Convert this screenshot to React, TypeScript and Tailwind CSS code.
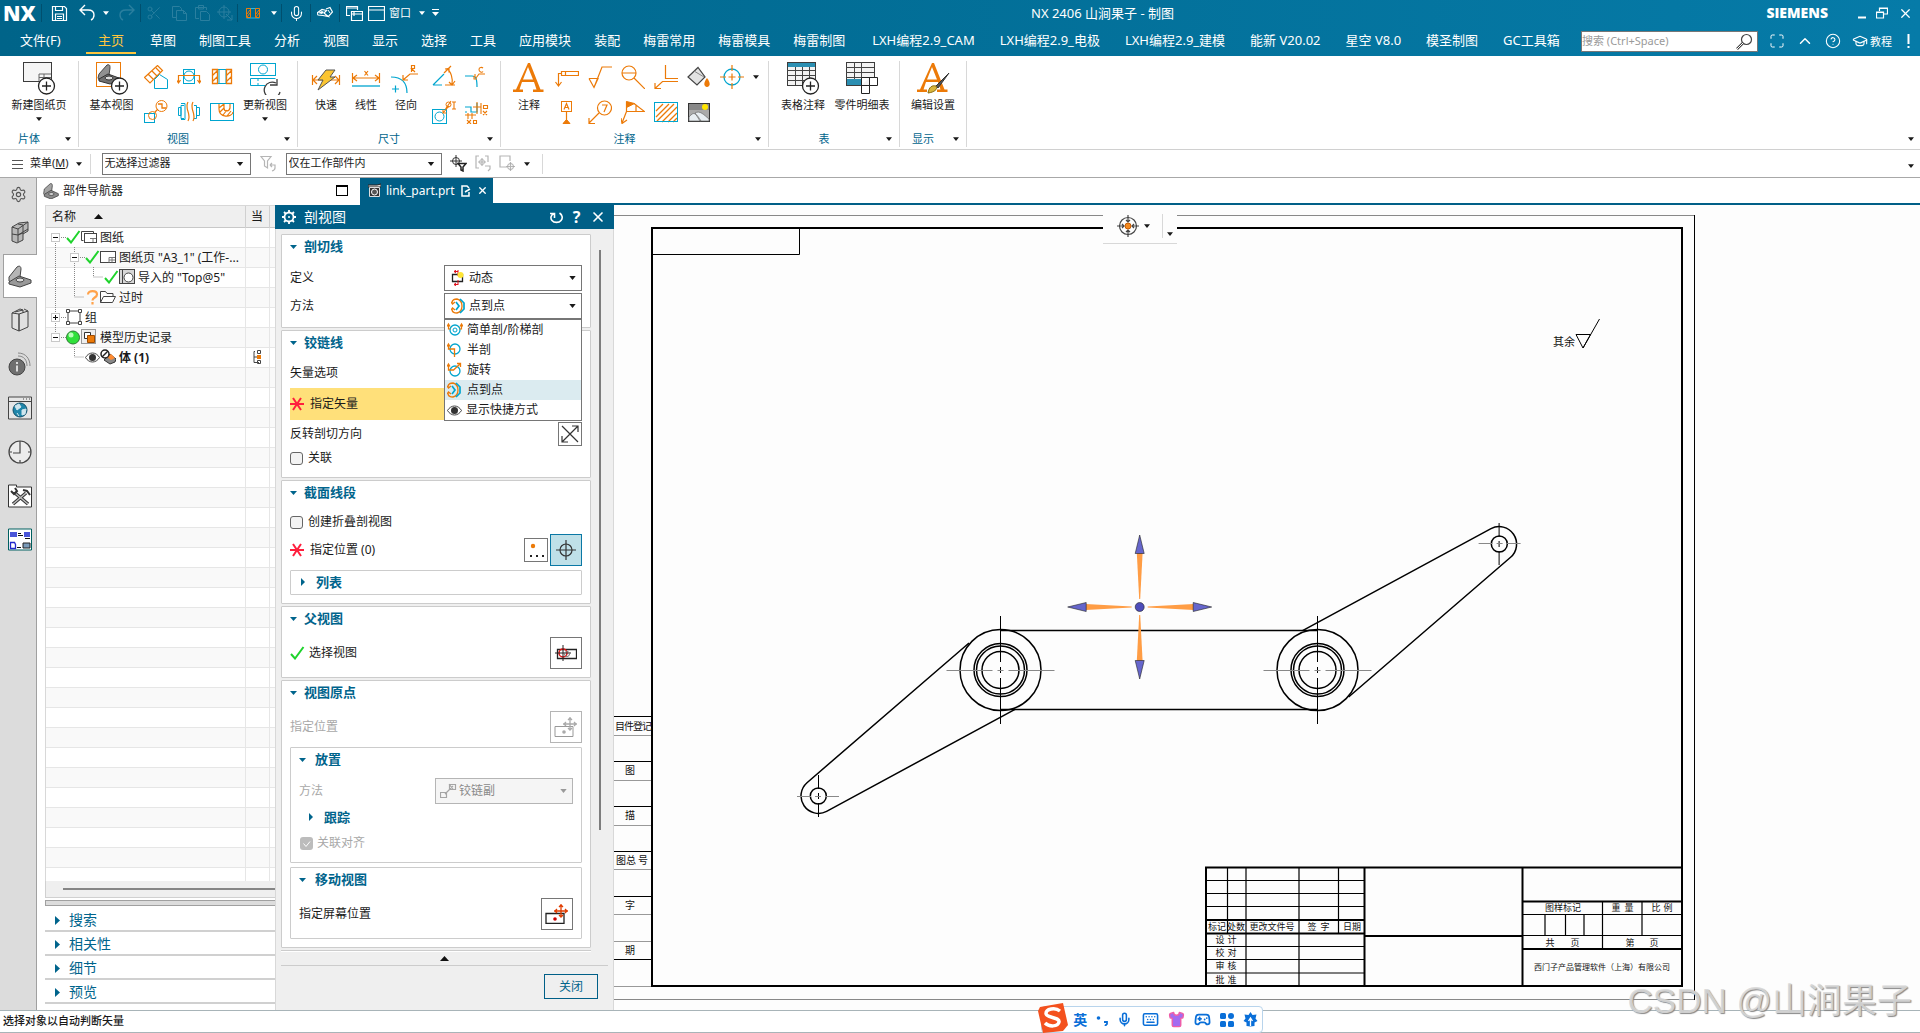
import type { ReactNode } from "react";
import { Settings, Maximize, ChevronUp, CircleHelp, GraduationCap, Mic, Scissors, X, Keyboard, Shirt, Gamepad2 } from "lucide-react";

const O = "#ec7a08";
const C = "#00a5cf";
const K = "#3c3c3c";

function Svg({ w = 24, h = w, box, children }: { w?: number; h?: number; box?: string; children: ReactNode }) {
  return (
    <svg width={w} height={h} viewBox={box ?? `0 0 ${w} ${h}`} fill="none" className="block shrink-0" aria-hidden="true">
      {children}
    </svg>
  );
}

function Caret({ color = "#1a1a1a", w = 6 }: { color?: string; w?: number }) {
  return (
    <Svg w={w} h={4} box="0 0 8 5">
      <path d="M0 0h8L4 5z" fill={color} />
    </Svg>
  );
}

/* ---------- ribbon icons ---------- */

const Plus = ({ x, y }: { x: number; y: number }) => (
  <g>
    <circle cx={x} cy={y} r="8" fill="#fff" stroke="#222" strokeWidth="1.3" />
    <path d={`M${x - 4.5} ${y}h9M${x} ${y - 4.5}v9`} stroke="#222" strokeWidth="1.3" />
  </g>
);

const NewSheet = () => (
  <Svg w={34}>
    <rect x="1.5" y="1.5" width="28" height="19" fill="#f5f5f5" stroke={K} />
    <path d="M17 13h12M17 16.5h12M17 13v7M22 13v7" stroke="#666" />
    <Plus x={24.5} y={25} />
  </Svg>
);

const Bracket = ({ s = 16 }: { s?: number }) => (
  <Svg w={s} box="0 0 24 24">
    <path d="M2 9L11 1c2-1 3 1 3 3l-1 8-10 7-2-3z" fill="#a5a5a5" stroke="#444" strokeWidth="1.2" />
    <path d="M2 17l10-6 11 5v3l-11 5L2 20z" fill="#8b8b8b" stroke="#444" strokeWidth="1.2" />
    <ellipse cx="12.5" cy="16.5" rx="4" ry="2.2" fill="#d5d5d5" stroke="#333" />
  </Svg>
);

const BaseView = () => (
  <Svg w={34}>
    <rect x="1.5" y="1.5" width="24" height="24" fill="#fff" stroke={O} />
    <path d="M4 13L12 4c3-1 3 1 3 3l-1 7-9 6-2-3z" fill="#909090" stroke="#444" />
    <path d="M4 18l9-5 11 4v3l-9 3-11-3z" fill="#707070" stroke="#333" />
    <ellipse cx="14" cy="17" rx="4" ry="2" fill="#ddd" stroke="#333" />
    <Plus x={24.5} y={25} />
  </Svg>
);

const UpdateView = () => (
  <Svg w={34}>
    <rect x="2.5" y="2.5" width="25" height="12" stroke={C} />
    <circle cx="15" cy="8.5" r="4.5" stroke={C} />
    <path d="M17 24.5H2.5v-7h25M10 18v2M10 22v2" stroke={C} />
    <path d="M29 18v6h-7M28 22a8 8 0 1 0 4 9" stroke={K} strokeWidth="1.3" />
  </Svg>
);

const viewIcons = [
  <g key="a">
    <path d="M.5 12.5L13.5.5l5 5L6 18zM4 9l5 5M8 6l5 5M12 3l4 4" stroke={O} strokeWidth="1.2" />
    <path d="M10.5 23.5v-9l5-5 8 5v9z" fill="#fff" stroke={C} />
  </g>,
  <g key="b">
    <rect x="6.5" y="4.5" width="11" height="14" stroke={C} />
    <circle cx="12" cy="11" r="5" stroke={C} />
    <path d="M1.5 17v-6.500h21V17M-.5 15l2 3 2-3M20.5 15l2 3 2-3" stroke={O} strokeWidth="1.2" />
  </g>,
  <g key="c">
    <path d="M2.5 4.5h19M2.5 18.5h19M9 4v15M16 4v15" stroke={C} />
    <path d="M2.5 4.5h5v14h-5zM16.5 4.5h5v14h-5zM2 11l6-6M2 17l6-6M16 11l6-6M16 17l6-6" stroke={O} strokeWidth="1.3" />
  </g>,
  <g key="d">
    <rect x=".5" y="13.5" width="10" height="9" stroke={C} />
    <circle cx="8.5" cy="15.5" r="4" stroke={O} />
    <circle cx="17.5" cy="6" r="5.5" stroke={O} />
    <path d="M11 12l3-3M14 4h4v4h4" stroke={O} strokeWidth="1.3" />
  </g>,
  <g key="e">
    <path d="M7 18.5H4v-13h3M1.5 7.5h2.500v8H1.5zM17 5.5h2.500v13H17M20 7.5h2.500v8H20M4 3.5h4v16H4" stroke={C} />
    <path d="M11 2c-4 7 4 12 0 19M16 2c-4 7 4 12 0 19" stroke={O} strokeWidth="1.2" />
  </g>,
  <g key="f">
    <rect x=".5" y="3.5" width="23" height="17" stroke={C} />
    <path d="M9 4v5c0 9 13 9 14 3M14 4v4c0 4 5 4 6 0V4M9 8l5-4M10 12l4-4M13 15l4-5M17 16l4-5" stroke={O} strokeWidth="1.2" />
  </g>,
];

const dimIcons = [
  <g key="a">
    <path d="M1 20L12 9M1 20h9" stroke={C} strokeWidth="1.2" />
    <path d="M12 8L19 1M13 20h10M15 4c4 2 6 10 5 15M13 4l4-.5v4M17 17l3 3 3-4" stroke={O} strokeWidth="1.2" />
  </g>,
  <g key="b">
    <path d="M0 11h7c4 0 5 3 5 11" stroke={C} strokeWidth="1.2" />
    <path d="M10 12V9M20 9h-6l-3 4M18 3c-1-1-4-1-4 1.500S17 8 18 6.500M9 11v3h3" stroke={O} strokeWidth="1.1" />
  </g>,
  <g key="c">
    <rect x=".5" y="9.5" width="14" height="14" stroke={C} />
    <circle cx="7.5" cy="16.5" r="4.5" stroke={C} />
    <path d="M11 13l6-7M11 9.500V13h3.500M20 2h4M22 2v7M20 9h4M13.5 9L19 1" stroke={O} strokeWidth="1.1" />
    <circle cx="16.5" cy="4.5" r="2.5" stroke={O} />
  </g>,
  <g key="d">
    <path d="M0 7h6v5h6V3M0 12h2" stroke={C} strokeWidth="1.2" />
    <path d="M0 15h11M8 7h8M12 2v12M16 3v11M3 13v6M7 13v6M18.5 5.5h4v3h-4zM18 11l4 4M22 11l-4 4M2 20l4 4M6 20l-4 4M8.500 20.5h3v3h-3z" stroke={O} strokeWidth="1.1" />
  </g>,
];

const noteIcons = [
  <g key="a" stroke={O}><path d="M6.5 6.5h17v4h-17zM10.5 6.5v4M6.5 8.500h-3V20M.5 17l3 4 3-4" strokeWidth="1.2" /></g>,
  <g key="b" stroke={O}><path d="M1 13.5h9L6 22.5 1 13.5M6 22.5L14 2h10" strokeWidth="1.2" /></g>,
  <g key="c" stroke={O}><circle cx="8" cy="8" r="7" strokeWidth="1.2" /><path d="M1 8h14M13 13l11 11" strokeWidth="1.2" /></g>,
  <g key="d" stroke={O}><path d="M11.5 0v13.500H24M24 16.5H8.500L1 23.5M1 18v5.500h6" strokeWidth="1.2" /></g>,
  <g key="e"><path d="M1 12L11 2.500 18 12 10 20z" fill="#e2e2e2" stroke="#444" strokeWidth="1.2" /><path d="M7 6L17 12" stroke="#888" /><path d="M20 13c6 8 0 9 0 9s-6-1 0-9z" fill={O} /></g>,
  <g key="f"><circle cx="12" cy="12" r="8" stroke={C} strokeWidth="1.3" /><path d="M12 0v6M12 18v6M0 12h6M18 12h6M8.500 12h7M12 8.500v7" stroke={O} strokeWidth="1.2" /></g>,
  <g key="g" stroke={O}><rect x="6.5" y="1.5" width="10" height="10" /><path d="M9 9.500L11.500 3.500 14 9.500M10 7.500h3M11.5 12v9" strokeWidth="1.2" /><path d="M8 23.500l3.500-4 3.500 4z" fill={O} /></g>,
  <g key="h" stroke={O}><circle cx="16.5" cy="8" r="7" strokeWidth="1.2" /><path d="M14 5h5l-3 7M11 13L1 23M1 18v5.500h6" strokeWidth="1.2" /></g>,
  <g key="i" stroke={O}><path d="M5.5 1.500v10h18L13 3.500M5.5 11.500L1 23M0 18l1 5.500 5-3.500M15 4.500v7" strokeWidth="1.2" /><path d="M5.5 1.500l8 2-8 4z" fill={O} /></g>,
  <g key="j"><path d="M2 11l7-7M2 17L15 4M3 21L20 4M8 22L23 7M14 22l9-9M19 22l4-4" stroke={O} strokeWidth="1.3" /><rect x=".5" y="2.5" width="23" height="19" stroke={C} /></g>,
  <g key="k"><rect x="1.5" y="3.5" width="21" height="18" fill="#aaa" stroke="#333" /><rect x="2" y="4" width="20" height="6" fill="#888" /><circle cx="18" cy="7" r="3" fill="#ffe600" /><path d="M2 17c5-6 7-4 12 4H2zM8 13c5-3 9 2 14 6v2h-9z" fill="#e8eef2" stroke="#666" strokeWidth=".7" /></g>,
];

const BigA = ({ brush = false }: { brush?: boolean }) => (
  <Svg w={34}>
    <path d="M16 2h2l10.500 26.500h3V31H21v-2.500h3.500L22 21H10l-2.500 7.500H11V31H1v-2.500h3zM11 18.500h10L16 6z" fill={O} />
    {brush && (
      <g>
        <path d="M33 12L20 25l2 2z" fill="#555" stroke="#333" />
        <path d="M12 32c1-6 4-8 8-7 2 2 0 6-8 7z" fill="#d8b53c" stroke="#8a6b10" />
      </g>
    )}
  </Svg>
);

const Fast = () => (
  <Svg w={34}>
    <path d="M3.5 14v10M30.5 14v10M4 19h26M8 15l-4 4 4 4M26 15l4 4-4 4" stroke={O} strokeWidth="1.2" />
    <path d="M17 9h9l-5 7h5L9 29l5-10H9z" fill="#fbc531" stroke="#555" />
  </Svg>
);

const Linear = () => (
  <Svg w={34}>
    <path d="M3.5 12v10M30.5 12v10M4 17h26M8 14l-4 3 4 3M26 14l4 3-4 3M15.5 10l3.500 4.500M19 10l-3.500 4.500" stroke={O} strokeWidth="1.2" />
    <path d="M3 25h28" stroke={C} strokeWidth="1.3" />
  </Svg>
);

const Radial = () => (
  <Svg w={34}>
    <path d="M2 16c11 0 16 6 16 16M3 28h7M6.5 24.500v7" stroke={C} strokeWidth="1.2" />
    <path d="M29 13h-8l-7 6M14 14v5h5M22.5 11V4.500h3v3h-3l3.500 3.500" stroke={O} strokeWidth="1.2" />
  </Svg>
);

const TableNote = () => (
  <Svg w={34}>
    <rect x="1.5" y="1.5" width="28" height="23" fill="#f3f3f3" stroke={K} />
    <rect x="2" y="2" width="27" height="4" fill="#2b8fb2" />
    <path d="M1 9.500h28M1 14.500h28M1 19.500h28M9.500 6v18M16.500 6v18M23.500 6v18" stroke="#444" />
    <Plus x={24.5} y={25} />
  </Svg>
);

const PartList = () => (
  <Svg w={34}>
    <rect x="1.5" y="1.5" width="28" height="23" fill="#f3f3f3" stroke={K} />
    <rect x="2" y="18" width="15" height="6" fill="#2b8fb2" />
    <path d="M1 6.500h28M1 11.500h28M1 16.500h28M9.500 1v17M16.500 1v15" stroke="#444" />
    <path d="M16.500 16.500h16v8h-8v8h-8zM16.500 24.500h8v-8" fill="#fff" stroke="#222" />
  </Svg>
);

/* ---------- ribbon ---------- */

function BigTool({ icon, label, caret, w }: { icon: ReactNode; label: string; caret?: boolean; w: string }) {
  return (
    <button className={`${w} flex flex-col items-center text-[11px] leading-5 whitespace-nowrap`}>
      {icon}
      {label}
      {caret && <span className="pt-0.5"><Caret /></span>}
    </button>
  );
}

function Tools({ icons, cols, names }: { icons: ReactNode[]; cols: string; names: string }) {
  return (
    <div className={`grid ${cols} gap-x-[9px] gap-y-[11px] content-start pt-1`}>
      {icons.map((icon, i) => (
        <button key={i} aria-label={`${names} ${i + 1}`}><Svg w={24}>{icon}</Svg></button>
      ))}
    </div>
  );
}

function Group({ label, w, children }: { label: string; w: string; children: ReactNode }) {
  return (
    <section className={`${w} flex shrink-0 flex-col border-r border-[#d8d8d8]`}>
      <div className="flex h-[70px]">{children}</div>
      <div className="flex h-4 items-end text-[11px] leading-4 text-[#00648c]">
        <span className="flex-1 text-center">{label}</span>
        <button className="flex h-4 w-5 items-center justify-center" aria-label={`${label} 选项`}><Caret /></button>
      </div>
    </section>
  );
}

function Ribbon() {
  return (
    <div className="flex h-[94px] border-b border-[#d0d0d0] bg-white pt-[5px] pb-0.5">
      <Group label="片体" w="w-[79px]">
        <BigTool icon={<NewSheet />} label="新建图纸页" caret w="w-full" />
      </Group>
      <Group label="视图" w="w-[219px]">
        <BigTool icon={<BaseView />} label="基本视图" w="w-[65px]" />
        <Tools icons={viewIcons} cols="grid-cols-3" names="视图" />
        <BigTool icon={<UpdateView />} label="更新视图" caret w="w-[62px]" />
      </Group>
      <Group label="尺寸" w="w-[203px]">
        <div className="w-2" />
        <BigTool icon={<Fast />} label="快速" w="w-10" />
        <BigTool icon={<Linear />} label="线性" w="w-10" />
        <BigTool icon={<Radial />} label="径向" w="w-10" />
        <div className="w-1.5" />
        <Tools icons={dimIcons} cols="grid-cols-2" names="尺寸" />
      </Group>
      <Group label="注释" w="w-[268px]">
        <div className="w-0.5" />
        <BigTool icon={<BigA />} label="注释" w="w-[52px]" />
        <Tools icons={noteIcons} cols="grid-cols-6" names="注释" />
        <button className="flex h-8 w-6 items-center justify-center" aria-label="更多"><Caret /></button>
      </Group>
      <Group label="表" w="w-[131px]">
        <div className="w-1" />
        <BigTool icon={<TableNote />} label="表格注释" w="w-[60px]" />
        <BigTool icon={<PartList />} label="零件明细表" w="w-[58px]" />
      </Group>
      <Group label="显示" w="w-[67px]">
        <BigTool icon={<BigA brush />} label="编辑设置" w="w-full" />
      </Group>
      <button className="mt-auto mr-1.5 mb-1.5 ml-auto self-end" aria-label="功能区选项"><Caret /></button>
    </div>
  );
}

/* ---------- header ---------- */

const menus = ["草图", "制图工具", "分析", "视图", "显示", "选择", "工具", "应用模块", "装配", "梅雷常用", "梅雷模具", "梅雷制图"];
const addOns = ["LXH编程2.9_CAM", "LXH编程2.9_电极", "LXH编程2.9_建模", "能新 V20.02", "星空 V8.0", "模圣制图", "GC工具箱"];

const Sep = () => <span className="h-[18px] w-px shrink-0 bg-[#004f6e]" />;

function QBtn({ w, name, dim, children }: { w: string; name: string; dim?: boolean; children: ReactNode }) {
  return (
    <button aria-label={name} className={`${w} flex shrink-0 items-center justify-center ${dim ? "text-[#2a7f9f]" : "text-white"}`}>
      {children}
    </button>
  );
}

function Header() {
  return (
    <header className="h-14 bg-gradient-to-r from-[#006489] to-[#067ba8] text-white">
      <div className="flex h-[26px] items-center">
        <span className="w-[41px] shrink-0 pl-[3px] text-[21px] leading-6 font-extrabold [font-family:'Open_Sans',sans-serif]">NX</span>
        <Sep />
        <QBtn w="w-[34px]" name="保存">
          <Svg w={17}><path d="M1.5 1.500h12l2 2v12h-14zM4.500 1.500v4h7v-4M4.500 15v-6h8v6M6 11.500h5M6 13.500h5" stroke="#fff" strokeWidth="1.2" /></Svg>
        </QBtn>
        <QBtn w="w-[22px]" name="撤消">
          <Svg w={18}><path d="M7 1L2 6l5 5M2 6h8c4 0 6 2 6 5s-1 4-3 5" stroke="#fff" strokeWidth="1.4" /></Svg>
        </QBtn>
        <QBtn w="w-4" name="撤消列表"><Caret color="#fff" /></QBtn>
        <QBtn w="w-[26px]" name="重做" dim>
          <Svg w={18}><path d="M11 1l5 5-5 5M16 6H8c-4 0-6 2-6 5s1 4 3 5" stroke="#2a7f9f" strokeWidth="1.4" /></Svg>
        </QBtn>
        <Sep />
        <QBtn w="w-[26px]" name="剪切" dim><Scissors size={16} strokeWidth={1.3} /></QBtn>
        <QBtn w="w-[23px]" name="复制" dim>
          <Svg w={16}><path d="M5.5 12.500h-4v-11h7l2 2v2M5.5 5.500h7l3 3v7h-10zM12.500 5.500v3h3" stroke="#2a7f9f" /></Svg>
        </QBtn>
        <QBtn w="w-[23px]" name="粘贴" dim>
          <Svg w={16}><path d="M5 13.500H1.500v-11h11V5M4.500 4V.5h5V4zM6.500 6.500h6l3 3v6h-9z" stroke="#2a7f9f" /></Svg>
        </QBtn>
        <QBtn w="w-6" name="定位" dim>
          <Svg w={16}><circle cx="7" cy="7" r="5" stroke="#2a7f9f" /><path d="M7 0v14M0 7h14M9 9l6 6M15 10v5h-5" stroke="#2a7f9f" /></Svg>
        </QBtn>
        <Sep />
        <QBtn w="w-[30px]" name="剖视">
          <Svg w={14}><path d="M.5 2.500h13M.5 12h13" stroke="#22b8e6" /><path d="M.5 2.500h4v9h-4zM9.500 2.500h4v9h-4zM1 8l3-4M1 11l3-4M10 8l3-4M10 11l3-4" stroke={O} /></Svg>
        </QBtn>
        <QBtn w="w-3" name="剖视列表"><Caret color="#fff" /></QBtn>
        <span className="w-px" />
        <Sep />
        <QBtn w="w-7" name="语音"><Mic size={17} strokeWidth={1.5} /></QBtn>
        <Sep />
        <QBtn w="w-7" name="触控">
          <Svg w={16}><path d="M0 8l5-3.500 4.500 1L7 8l4 3.500-5-1-5-.5zM9 4l4-1.500 2.500 4.500-4 4.500-3-2" stroke="#fff" strokeWidth="1.2" /><path d="M1 8l4-2 2 1-2 2z" fill="#fff" /><path d="M11 5l2 3" stroke="#fff" /></Svg>
        </QBtn>
        <Sep />
        <QBtn w="w-7" name="切换窗口">
          <Svg w={17}><path d="M4 10.500H.5v-9h11V5M1 3h10M5.500 6.500h11v9h-11zM5 9h11M8 11v-5" stroke="#fff" strokeWidth="1.2" /></Svg>
        </QBtn>
        <button className="flex shrink-0 items-center gap-1 text-[11px] leading-4">
          <Svg w={17}><path d="M.5 1.500h16v14H.5zM.5 5h16" stroke="#fff" strokeWidth="1.2" /></Svg>
          窗口
          <span className="pl-1"><Caret color="#fff" /></span>
        </button>
        <QBtn w="w-5" name="自定义">
          <Svg w={7} h={8}><path d="M0 .5h7" stroke="#fff" /><path d="M0 3h7L3.500 7z" fill="#fff" /></Svg>
        </QBtn>
        <h1 className="ml-auto text-[13px] leading-5 whitespace-nowrap">NX 2406 山涧果子 - 制图</h1>
        <div className="flex w-[746px] shrink-0 items-center justify-end gap-2.5 pr-[7px]">
          <span className="pr-5 text-[14px] leading-4 font-extrabold [font-family:'Open_Sans',sans-serif]">SIEMENS</span>
          <button aria-label="最小化"><Svg w={8} h={12}><path d="M0 10.500h8" stroke="#fff" strokeWidth="2" /></Svg></button>
          <button aria-label="还原"><Svg w={12}><path d="M3.500 4V1h8v6H8M.5 5h7v6h-7zM.5 5.500h7M3.500 1.500h8" stroke="#fff" strokeWidth="1.2" /></Svg></button>
          <button aria-label="关闭窗口"><X size={15} strokeWidth={2} /></button>
        </div>
      </div>
      <nav className="flex h-[30px] text-[13px] leading-[29px] whitespace-nowrap">
        <a href="#file" className="w-[86px] pl-5">文件(F)</a>
        <a href="#home" className="flex w-[50px] flex-col items-center text-[#ffc53d]">
          <span className="h-[26px]">主页</span>
          <span className="h-0.5 w-full bg-[#ffc53d]" />
        </a>
        <div className="flex gap-[23px] pl-3.5">
          {menus.map((m) => <a key={m} href={`#${m}`}>{m}</a>)}
        </div>
        <div className="flex gap-[25px] pl-[27px]">
          {addOns.map((m) => <a key={m} href={`#${m}`}>{m}</a>)}
        </div>
        <div className="ml-auto flex items-center gap-[11px] pr-2.5">
          <label className="flex h-[21px] w-[177px] items-center border border-[#777] bg-white pr-1">
            <input aria-label="搜索" placeholder="搜索 (Ctrl+Space)" className="min-w-0 flex-1 text-[11px] leading-4 text-black outline-none placeholder:text-[#9a9a9a]" />
            <Svg w={17}><circle cx="10.5" cy="6.5" r="5" stroke="#444" strokeWidth="1.2" /><path d="M7 10l-6 6" stroke="#444" strokeWidth="2.5" /><path d="M7 10l-6 6" stroke="#fff" /></Svg>
          </label>
          <button aria-label="全屏"><Maximize size={16} strokeWidth={1.5} /></button>
          <button aria-label="折叠"><ChevronUp size={18} strokeWidth={2} /></button>
          <button aria-label="帮助"><CircleHelp size={16} strokeWidth={1.6} /></button>
          <button className="flex items-center gap-0.5 text-[11px]"><GraduationCap size={16} strokeWidth={1.7} />教程</button>
          <button aria-label="提示" className="pl-1"><Svg w={3} h={16}><path d="M1.5 1v10M1.5 13v2" stroke="#fff" strokeWidth="2" /></Svg></button>
        </div>
      </nav>
    </header>
  );
}

function FilterSelect({ w, name, value }: { w: string; name: string; value: string }) {
  return (
    <div className={`${w} relative h-[22px] border border-[#767676] bg-white`}>
      <select aria-label={name} className="size-full appearance-none px-0.5 text-[11px] outline-none">
        <option>{value}</option>
      </select>
      <span className="pointer-events-none absolute top-2 right-1.5"><Caret w={8} /></span>
    </div>
  );
}

function FilterBar() {
  return (
    <div className="flex h-7 items-center border-b border-[#a8a8a8] bg-white text-[11px]">
      <button className="ml-3 flex items-center gap-[7px]">
        <Svg w={11} h={10}><path d="M0 1.500h11M0 5.500h11M0 9.500h11" stroke="#555" /></Svg>
        <span>菜单(<u>M</u>)</span>
        <Caret />
      </button>
      <span className="mr-[11px] ml-2 h-5 w-px bg-[#d8d8d8]" />
      <FilterSelect w="w-[149px]" name="类型过滤器" value="无选择过滤器" />
      <button aria-label="重置过滤器" className="mx-[9px]">
        <Svg w={17}><path d="M1 1.500h10L7.500 6v7l-3-2V6zM10 10h5v3c0 2-3 3-3 3M10 10l2-2M10 10l2 2" stroke="#b5b5b5" strokeWidth="1.2" /></Svg>
      </button>
      <FilterSelect w="w-[156px]" name="选择范围" value="仅在工作部件内" />
      <button aria-label="捕捉过滤" className="ml-2">
        <Svg w={17}><circle cx="6" cy="6" r="3.5" stroke="#333" /><path d="M6 0v12M0 6h12" stroke="#333" /><path d="M8 8.500h8L13 12v4l-2-1v-3z" fill="#fff" stroke="#222" strokeWidth="1.5" /></Svg>
      </button>
      <button aria-label="选择组" className="ml-2">
        <Svg w={17}><path d="M4 1H1v12h3M10 1h3v6M10 11h5v3l-2 2M7 3v8M3 7h8" stroke="#b5b5b5" strokeWidth="1.2" /><circle cx="7" cy="7" r="2.5" stroke="#b5b5b5" /></Svg>
      </button>
      <button aria-label="框选" className="ml-[7px]">
        <Svg w={17}><path d="M8 12H1V1h10v5M11.500 7v9M7 11.500h9" stroke="#b5b5b5" strokeWidth="1.2" /><circle cx="11.5" cy="11.5" r="3" stroke="#aaa" /></Svg>
      </button>
      <button aria-label="更多选择" className="ml-2"><Caret /></button>
      <span className="ml-3 h-5 w-px bg-[#d8d8d8]" />
      <button aria-label="工具条选项" className="mt-1 mr-1.5 ml-auto"><Caret /></button>
    </div>
  );
}

/* ---------- resource bar ---------- */

const resources: { name: string; icon: ReactNode }[] = [
  {
    name: "装配导航器",
    icon: <g stroke="#444" fill="#b8b8b8"><path d="M4 7l7-4 9-1v9l-5 3v6l-6 3-5-2z" /><path d="M4 7l6 2 10-7M10 9v13M4 14l6 1 5-2M10 15l10-6M15 5v9M10 4l5 1" fill="none" /></g>,
  },
  {
    name: "部件导航器",
    icon: <g stroke="#444"><path d="M1 13L9 3c3-2 4 0 4 2l-1 8-8 6-3-2z" fill="#b5b5b5" /><path d="M1 18l10-6 12 4v3l-11 4-11-3z" fill="#999" /><ellipse cx="12" cy="16" rx="4" ry="2" fill="#ddd" /></g>,
  },
  {
    name: "重用库",
    icon: <g stroke="#444" fill="#e0e0e0"><path d="M4 5l8-4 3 1v17l-4 4-7-3z" /><path d="M11 6l9-3v16l-9 4zM4 5l7 1M11 6v17M7 4l8-2M16 1l4 2" /></g>,
  },
  {
    name: "HD3D 工具",
    icon: <g><circle cx="9" cy="15" r="8" fill="#6f6f6f" stroke="#444" /><path d="M9 10v2M9 13.500v6" stroke="#fff" strokeWidth="1.5" /><path d="M10 4c6 0 9 4 9 10M10 1c8 0 12 6 12 13" stroke="#888" /></g>,
  },
  {
    name: "Web 浏览器",
    icon: <g><path d="M.5 1h23v22H.5z" fill="#e6e6e6" stroke="#444" /><path d="M1 5.500h22M15 3h1M18 3h1M21 3h1" stroke="#444" /><circle cx="12" cy="14" r="7" fill="#1f86aa" stroke="#14506a" /><path d="M7 10l4-2 2 3-4 3zM14 14l4-1-1 5-3 1zM9 17l2 3" fill="#cfe6ee" stroke="#cfe6ee" /></g>,
  },
  {
    name: "历史记录",
    icon: <g stroke="#444" strokeWidth="1.2"><circle cx="12" cy="12" r="11" fill="#ececec" /><path d="M12 1v12H5M12 20v3M1 12h3M20 12h3" /></g>,
  },
  {
    name: "加工向导",
    icon: <g stroke="#333"><path d="M.5 23V1h8v2h15v20z" fill="#fff" /><path d="M7 9l13 11M18 9L5 20" strokeWidth="3.5" /><path d="M7 9l13 11M18 9L5 20" stroke="#bbb" strokeWidth="1.5" /><path d="M3 7l3 3 3-3-2-3M15 6l4 1 3 4" strokeWidth="2" /></g>,
  },
  {
    name: "角色",
    icon: <g><path d="M.5 1h23v21H.5z" fill="#fff" stroke="#006060" /><path d="M2 4h7v5H2zM16 4h6v5h-6z" fill="#4a55d8" /><path d="M10 5.500h3M10 7.500h5M17 10.500h5M9 19.500h4" stroke="#111" strokeWidth="1.2" /><path d="M2.500 14.500h4l1 2v4h-5z" stroke="#2228cc" strokeWidth="1.3" /><path d="M15 15h7v5h-7z" fill="#7a9ab8" stroke="#222" /></g>,
  },
];

function ResourceBar() {
  return (
    <aside className="flex w-[37px] shrink-0 flex-col border-r border-[#a0a0a0] bg-[#dcdcdc]">
      <button aria-label="资源条选项" className="flex h-8 items-center justify-center"><Settings size={17} strokeWidth={1.6} color="#555" /></button>
      {resources.map((r) => (
        <button
          key={r.name}
          aria-label={r.name}
          className={r.name === "部件导航器"
            ? "-mr-px ml-[3px] flex h-11 items-center border border-r-0 border-[#a0a0a0] bg-white pl-1"
            : "flex h-11 items-center pl-2"}
        >
          <Svg w={24}>{r.icon}</Svg>
        </button>
      ))}
    </aside>
  );
}

/* ---------- part navigator ---------- */

const Check = () => (
  <Svg w={15} h={14}><path d="M1 8l4 4.500L13.500 1" stroke="#1fd32c" strokeWidth="2" /></Svg>
);
const SheetIcon = () => (
  <Svg w={16}><rect x=".5" y="2.5" width="15" height="11" fill="#fff" stroke="#444" /><path d="M9 8.500h6M9 11h6M9 8.500v5M12 8.500v5" stroke="#777" /></Svg>
);
const SheetsIcon = () => (
  <Svg w={16}><path d="M2.500 11.500h-2v-9h12v2" stroke="#444" /><rect x="3.5" y="4.5" width="12" height="9" fill="#fff" stroke="#444" /><path d="M9 9.500h6M12 9v4" stroke="#777" /></Svg>
);
const EyeIcon = () => (
  <Svg w={15}><path d="M.5 7.500C4 1.500 11 1.500 14.500 7.500 11 13.500 4 13.500.5 7.500z" fill="#fff" stroke="#444" /><circle cx="7.5" cy="7.5" r="3.5" fill="#333" /></Svg>
);

type Row = { level: number; box?: string; icons: ReactNode; text: string; bold?: boolean; mark?: boolean };

const rows: Row[] = [
  { level: 0, box: "M2 4.500h5", icons: <><Check /><SheetsIcon /></>, text: "图纸" },
  { level: 1, box: "M2 4.500h5", icons: <><Check /><SheetIcon /></>, text: '图纸页 "A3_1" (工作-...' },
  {
    level: 2,
    icons: <><Check /><Svg w={16}><rect x=".5" y=".5" width="15" height="14" fill="#d8d8d8" stroke="#444" /><circle cx="9.5" cy="8.5" r="4.5" fill="#fff" stroke="#444" /><path d="M3.500 1v14" stroke="#444" /></Svg></>,
    text: '导入的 "Top@5"',
  },
  {
    level: 1,
    icons: <><Svg w={15}><path d="M3 4.500C3 0 12 0 12 4.500c0 3-4.500 3-4.500 6M7.500 12v2.500" stroke="#ffa24a" strokeWidth="2.2" /></Svg><Svg w={16}><path d="M.5 13.500v-11h5l1.500 2h6v3M.5 13.500l3-6h12l-3 6z" fill="#fff" stroke="#444" /></Svg></>,
    text: "过时",
  },
  {
    level: 0,
    box: "M2 4.500h5M4.500 2v5",
    icons: <Svg w={16}><path d="M2 2h12v12H2z" stroke="#444" /><path d="M.5.5h3v3h-3zM12.500.5h3v3h-3zM.5 12.500h3v3h-3zM12.500 12.500h3v3h-3z" fill="#fff" stroke="#444" /></Svg>,
    text: "组",
  },
  {
    level: 0,
    box: "M2 4.500h5",
    icons: <><Svg w={15}><circle cx="7" cy="7.5" r="6.5" fill="#2fe03a" stroke="#2a7a30" /><circle cx="5" cy="5" r="2.5" fill="#b8ffb8" /></Svg><Svg w={16}><rect x=".5" y=".5" width="14" height="14" fill="#eee" stroke="#999" /><path d="M3.500 3.500h6v6h-6z" fill="#fff" stroke="#333" /><path d="M6.500 6.500h7v7h-7z" fill={O} stroke="#a04c00" /></Svg></>,
    text: "模型历史记录",
  },
  {
    level: 1,
    icons: <><EyeIcon /><Svg w={16}><path d="M4 11l6-6 6 5-1 3-5 2z" fill="#888" stroke="#333" /><path d="M7 8l4-3 4 4-4 2z" fill="#ff8a30" /><circle cx="5" cy="5" r="4" fill="#fff" stroke="#222" strokeWidth="1.5" /><path d="M2 8l6-6" stroke="#222" strokeWidth="1.5" /></Svg></>,
    text: "体 (1)",
    bold: true,
    mark: true,
  },
];

const indents = ["pl-[5px]", "pl-6", "pl-[43px]"];
const sections = ["搜索", "相关性", "细节", "预览"];

function PartNavigator() {
  const blanks = Array.from({ length: 40 }, (_, i) => i);
  return (
    <div className="flex w-[238px] shrink-0 flex-col overflow-hidden pl-2">
      <div className="relative min-h-0 flex-1 overflow-hidden border-t border-l border-[#d8d8d8]">
        <table className="w-full table-fixed border-collapse text-left text-[12px] leading-[19px]">
          <thead>
            <tr className="h-[21px] border-b border-[#c8c8c8] bg-[#efefef]">
              <th className="w-[199px] pl-1.5 font-normal">
                <span className="flex items-center gap-[18px]">名称 <Svg w={9} h={5}><path d="M0 5h9L4.500 0z" fill="#111" /></Svg></span>
              </th>
              <th className="w-6 border-l border-[#d0d0d0] text-center font-normal">当</th>
              <th className="border-l border-[#d0d0d0]" aria-label="最新" />
            </tr>
          </thead>
          <tbody>
            {rows.map((r) => (
              <tr key={r.text} className="h-5 border-b border-[#e6e6e6] even:bg-[#f9f9f9]">
                <td className={indents[r.level]}>
                  <div className="flex h-[19px] items-center overflow-hidden whitespace-nowrap">
                    <span className="flex w-[15px] shrink-0">
                      {r.box && (
                        <button aria-label={`展开 ${r.text}`}>
                          <Svg w={9}><rect x=".5" y=".5" width="8" height="8" fill="#fff" stroke="#c8c8c8" /><path d={r.box} stroke="#111" /></Svg>
                        </button>
                      )}
                    </span>
                    {r.icons}
                    <span className={r.bold ? "pl-[3px] font-bold" : "pl-[3px]"}>{r.text}</span>
                  </div>
                </td>
                <td className="border-l border-[#e6e6e6] pl-1">
                  {r.mark && <Svg w={14}><path d="M5 1.500H4v11h5M4 7h5M7.500.5h3v3h-3zM7.500 10.500h3v3h-3z" stroke="#444" /><path d="M7 5h4v4H7z" fill={O} /></Svg>}
                </td>
                <td className="border-l border-[#e6e6e6]" />
              </tr>
            ))}
            {blanks.map((i) => (
              <tr key={i} className="h-5 border-b border-[#e6e6e6] odd:bg-white even:bg-[#f9f9f9]">
                <td />
                <td className="border-l border-[#e6e6e6]" />
                <td className="border-l border-[#e6e6e6]" />
              </tr>
            ))}
          </tbody>
        </table>
        <svg width="80" height="145" className="pointer-events-none absolute top-[21px] left-0" fill="none" stroke="#888" strokeDasharray="1 1" aria-hidden="true">
          <path d="M9.500 16v69M9.500 96v9M28.500 20v5M28.500 36v34h9M47.500 40v10h9M28.500 120v10h9M15 10.500h5M34 30.500h5M15 90.500h5M15 110.500h5" />
        </svg>
      </div>
      <div className="h-[17px] border-b border-l border-[#d0d0d0] bg-[#efefef] pt-[7px] pl-[17px]"><div className="h-0.5 bg-[#858585]" /></div>
      <div className="mt-0.5 h-1.5 border border-r-0 border-[#a0a0a0] bg-[#dcdcdc]" />
      <div className="pt-0.5 pb-1.5">
        {sections.map((s) => (
          <button key={s} className="flex h-6 w-full items-center gap-[9px] border-b-2 border-[#d0d0d0] pt-0.5 pl-2.5 text-[14px] leading-5 text-[#00648c]">
            <Svg w={5} h={9}><path d="M0 0v9l5-4.500z" fill="#00648c" /></Svg>
            {s}
          </button>
        ))}
      </div>
    </div>
  );
}

/* ---------- section view dialog ---------- */

function Head({ title, closed, nested }: { title: string; closed?: boolean; nested?: boolean }) {
  return (
    <h3 className="text-[13px] leading-[23px] font-bold text-[#00648c]">
      <button className="flex h-[25px] items-center pb-0.5">
        <span className={nested ? "w-4" : "w-[14px]"}>
          {closed
            ? <Svg w={5} h={9}><path d="M1 0v8l4-4z" fill="#00648c" /></Svg>
            : <Svg w={7} h={4}><path d="M0 0h7L3.500 4z" fill="#00648c" /></Svg>}
        </span>
        {title}
      </button>
    </h3>
  );
}

const Star = () => (
  <Svg w={14}><path d="M0 7h14M3 1l8 12M11 1L3 13" stroke="#ff1f3d" strokeWidth="2" /></Svg>
);

const PointIcon = () => (
  <Svg w={16}><path d="M1 5c0-4 3-4 5-4 4 1 5 4 5 7s-1 6-5 7c-2 0-5 0-5-4M0 4l1.500 2L4 4M0 12l1.500-2L4 12" stroke={O} strokeWidth="1.3" /><path d="M5 4l3 4-3 4M9 1l4 4v6l-4 4" stroke={C} strokeWidth="1.7" /></Svg>
);

const methods: { name: string; icon: ReactNode }[] = [
  { name: "简单剖/阶梯剖", icon: <Svg w={16}><circle cx="8" cy="8" r="5" stroke={C} strokeWidth="1.3" /><circle cx="8" cy="8" r="2" stroke={C} /><path d="M1.500 3v4h2M14.500 3v4h-2M0 4.500L1.500 2 3 4.500M13 4.500L14.500 2 16 4.500" stroke={O} strokeWidth="1.2" /></Svg> },
  { name: "半剖", icon: <Svg w={16}><circle cx="8" cy="7" r="5" stroke={C} strokeWidth="1.3" /><path d="M1.500 2v5h6v8M0 4.500L1.500 2 3 4.500" stroke={O} strokeWidth="1.3" /></Svg> },
  { name: "旋转", icon: <Svg w={16}><circle cx="8" cy="9" r="5" stroke={C} strokeWidth="1.3" /><path d="M1.500 2v6h5L13 2M0 4.500L1.500 2 3 4.500M10 1.500h3.500V5" stroke={O} strokeWidth="1.3" /></Svg> },
  { name: "点到点", icon: <PointIcon /> },
  { name: "显示快捷方式", icon: <EyeIcon /> },
];

function IconSelect({ id, icon, value, disabled }: { id: string; icon: ReactNode; value: string; disabled?: boolean }) {
  return (
    <div className={disabled
      ? "relative flex h-[26px] w-[138px] items-center border border-[#b5b5b5] bg-[#f5f5f5] pl-1 text-[#8a8a8a]"
      : "relative flex h-[26px] w-[138px] items-center border border-[#767676] bg-white pl-1.5"}>
      {icon}
      <select id={id} disabled={disabled} className="h-full min-w-0 flex-1 appearance-none pl-0.5 text-[12px] leading-5 outline-none">
        <option>{value}</option>
      </select>
      <span className="pointer-events-none absolute top-[10px] right-[5px]"><Caret w={7} color={disabled ? "#999" : "#1a1a1a"} /></span>
    </div>
  );
}

const box = "rounded-[1px] border border-[#cccccc] bg-white px-2";
const square = "flex size-8 items-center justify-center border border-[#767676] bg-white";

function SectionDialog() {
  return (
    <div role="dialog" aria-label="剖视图" className="flex w-[339px] shrink-0 flex-col border-x border-[#d8d8d8] bg-[#efefef] text-[12px] leading-5">
      <div className="-mx-px flex h-6 shrink-0 items-center bg-[#005f87] pr-2 pl-[7px] text-white">
        <Svg w={14}><circle cx="7" cy="7" r="4.5" stroke="#fff" strokeWidth="1.8" /><path d="M7 0v2.500M7 11.500V14M0 7h2.500M11.500 7H14M2 2l2 2M10 10l2 2M12 2l-2 2M4 10l-2 2" stroke="#fff" strokeWidth="1.8" /><circle cx="7" cy="7" r="1" fill="#fff" /></Svg>
        <h2 className="pl-2 text-[14px] leading-6">剖视图</h2>
        <button aria-label="重置" className="ml-auto"><Svg w={13}><path d="M9.500 2c3 2 3.500 5 1.500 7.500s-7 2.500-9 0S1 4 3.500 3M0 2.500h4.500V7" stroke="#fff" strokeWidth="1.6" /></Svg></button>
        <button aria-label="帮助" className="w-[27px] text-[16px] leading-5 font-bold">?</button>
        <button aria-label="关闭"><X size={16} strokeWidth={2.5} /></button>
      </div>
      <div className="flex min-h-0 flex-1 pt-[5px] pl-[5px]">
        <div className="flex w-[310px] flex-col gap-0.5 overflow-hidden">
          <section className={box}>
            <Head title="剖切线" />
            <div className="mt-1 flex h-7 items-center justify-between">
              <label htmlFor="define">定义</label>
              <IconSelect
                id="define"
                value="动态"
                icon={<Svg w={16}><path d="M1.500 4.500h10v7h-10z" stroke="#222" strokeWidth="1.3" /><path d="M7 0v6M7 10v5M3 1.500h4M3 14.500h4M5 0L3 1.500 5 3M5 13l-2 1.500L5 16" stroke="#e0101c" /><circle cx="9.5" cy="5" r="3" fill="#ffe535" /></Svg>}
              />
            </div>
            <div className="mb-[7px] flex h-7 items-center justify-between">
              <label htmlFor="method">方法</label>
              <div className="relative">
                <IconSelect id="method" value="点到点" icon={<PointIcon />} />
                <ul role="listbox" aria-label="方法" className="absolute top-full right-0 z-10 w-[138px] border border-[#767676] bg-white">
                  {methods.map((m) => (
                    <li
                      key={m.name}
                      role="option"
                      aria-selected={m.name === "点到点"}
                      className={m.name === "点到点" ? "flex h-5 items-center gap-1 bg-[#dbebf0] pl-0.5" : "flex h-5 items-center gap-1 pl-0.5"}
                    >
                      {m.icon}
                      {m.name}
                    </li>
                  ))}
                </ul>
              </div>
            </div>
          </section>

          <section className={box}>
            <Head title="铰链线" />
            <div className="mt-[3px] flex h-7 items-center">矢量选项</div>
            <div className="mt-px flex h-8 items-center gap-1.5 bg-[#ffe07a]"><Star />指定矢量</div>
            <div className="flex h-7 items-center justify-between">
              反转剖切方向
              <button aria-label="反转剖切方向" className="flex size-6 items-center justify-center border border-[#767676] bg-white">
                <Svg w={18}><path d="M1 1l16 16M1 17L17 1M11 1h6v6M1 11v6h6" stroke="#333" strokeWidth="1.2" /></Svg>
              </button>
            </div>
            <label className="mb-[9px] flex h-5 items-center gap-[5px]">
              <input type="checkbox" className="size-[13px] appearance-none rounded-[3px] border border-[#666] bg-[#f3f3f3]" />
              关联
            </label>
          </section>

          <section className={box}>
            <Head title="截面线段" />
            <label className="mt-1.5 flex h-5 items-center gap-[5px]">
              <input type="checkbox" className="size-[13px] appearance-none rounded-[3px] border border-[#666] bg-[#f3f3f3]" />
              创建折叠剖视图
            </label>
            <div className="mt-0.5 flex h-8 items-center gap-1.5">
              <Star />
              指定位置 (0)
              <button aria-label="点对话框" className="-mr-1 ml-auto flex size-6 items-center justify-center border border-[#767676] bg-white">
                <Svg w={18}><circle cx="6" cy="5" r="2.2" fill={O} /><path d="M3 15h2M9 15h2M15 15h2" stroke="#222" strokeWidth="2" /></Svg>
              </button>
              <button aria-label="指定点" className="flex size-8 items-center justify-center border border-[#0a78a5] bg-[#bfe0e8]">
                <Svg w={20}><circle cx="10" cy="10" r="6" stroke="#333" strokeWidth="1.2" /><path d="M10 0v20M0 10h20" stroke="#333" strokeWidth="1.2" /></Svg>
              </button>
            </div>
            <div className="mt-1 mb-2 h-[25px] rounded-[1px] border border-[#cccccc] pl-[9px]">
              <Head title="列表" closed nested />
            </div>
          </section>

          <section className={box}>
            <Head title="父视图" />
            <div className="mt-[5px] mb-2 flex h-8 items-center gap-1">
              <Check />
              选择视图
              <button aria-label="选择视图" className={`${square} ml-auto`}>
                <Svg w={22} h={18}><path d="M2.500 5.500h19v9h-19z" stroke="#222" strokeWidth="1.3" /><circle cx="8" cy="9" r="4" stroke="#e01515" strokeWidth="1.5" /><path d="M8 1v16M0 9h16" stroke="#222" /><circle cx="12" cy="10" r="2.5" stroke="#777" /></Svg>
              </button>
            </div>
          </section>

          <section className={`${box} pb-2`}>
            <Head title="视图原点" />
            <div className="mt-[5px] flex h-8 items-center justify-between text-[#a8a8a8]">
              指定位置
              <button aria-label="指定位置" disabled className="flex size-8 items-center justify-center border border-[#b5b5b5] bg-white">
                <Svg w={24} h={20}><path d="M1 9.500h18v10H1z" stroke="#999" /><path d="M16 0v14M9 7h14M14 3l2-2 2 2M14 11l2 2 2-2M12 5l-2 2 2 2M20 5l2 2-2 2" stroke="#aaa" strokeWidth="1.3" /><circle cx="10" cy="15" r="1.8" fill="#aaa" /></Svg>
              </button>
            </div>
            <div className={`${box} mt-1`}>
              <Head title="放置" nested />
              <div className="mt-1 flex h-7 items-center justify-between text-[#a8a8a8]">
                <label htmlFor="place">方法</label>
                <IconSelect
                  id="place"
                  value="铰链副"
                  disabled
                  icon={<Svg w={17} h={16}><path d="M.5 9.500h6v5h-6zM9.500 1.500h6v5h-6zM5 11L13 3M9 1l4 5" stroke="#a5a5a5" strokeWidth="1.2" /></Svg>}
                />
              </div>
              <div className="h-[26px] pt-px pl-[9px]"><Head title="跟踪" closed nested /></div>
              <label className="mb-[7px] flex h-6 items-center gap-1 pl-px text-[#a8a8a8]">
                <span className="grid size-[13px]">
                  <input type="checkbox" checked readOnly disabled className="col-start-1 row-start-1 size-[13px] appearance-none rounded-[3px] bg-[#bcbcbc]" />
                  <span className="pointer-events-none col-start-1 row-start-1"><Svg w={13}><path d="M3.500 6.500l2.500 3 4-5" stroke="#fff" /></Svg></span>
                </span>
                关联对齐
              </label>
            </div>
            <div className={`${box} mt-1`}>
              <Head title="移动视图" nested />
              <div className="mt-[5px] mb-2 flex h-8 items-center justify-between">
                指定屏幕位置
                <button aria-label="指定屏幕位置" className={square}>
                  <Svg w={24} h={20}><path d="M1 9.500h18v10H1z" stroke="#222" strokeWidth="1.3" /><path d="M16 0v14M9 7h14M14 3l2-2 2 2M14 11l2 2 2-2M12 5l-2 2 2 2M20 5l2 2-2 2" stroke="#e03c00" strokeWidth="1.3" /><circle cx="10" cy="15" r="1.8" fill="#c00" /></Svg>
                </button>
              </div>
            </div>
          </section>
          <div className="h-0.5 shrink-0 border-t border-[#cccccc] bg-white" />
        </div>
        <div className="mt-4 ml-2 h-[580px] w-0.5 bg-[#7d7d7d]" />
      </div>
      <div className="mx-[5px] flex h-[14px] shrink-0 items-center justify-center border-b border-[#cccccc]">
        <Svg w={9} h={5}><path d="M0 5h9L4.500 0z" fill="#111" /></Svg>
      </div>
      <div className="flex h-11 shrink-0 items-start justify-end pt-2 pr-[15px]">
        <button className="h-[25px] w-[54px] border border-[#005f87] text-[12px] leading-5 text-[#00648c]">关闭</button>
      </div>
    </div>
  );
}

/* ---------- drawing sheet ---------- */

const Hub = ({ x }: { x: number }) => (
  <g>
    <circle cx={x} cy="670" r="40.5" />
    <circle cx={x} cy="670" r="26.5" />
    <circle cx={x} cy="670" r="24" />
    <circle cx={x} cy="670" r="18.5" />
    <path d={`M${x} 616v46M${x} 667v6M${x} 678v46`} strokeWidth="1" />
    <path d={`M${x - 54} 670.500h46M${x - 3} 670.500h6M${x + 8} 670.500h46`} strokeWidth="1" stroke="#888" />
  </g>
);

const Arm = () => (
  <g>
    <path d="M969 643L807 782.700A17.500 17.500 0 0 0 826.600 811.400L1015 709.300" />
    <circle cx="818.3" cy="796" r="8" />
    <path d="M818.500 775v14M818.500 793v6M818.500 803v14" strokeWidth="1" />
    <path d="M797 796.500h14M815 796.500h6M825 796.500h14" strokeWidth="1" stroke="#888" />
  </g>
);

const Pointer = ({ len }: { len: number }) => (
  <g>
    <path d={`M-.5 -8h1L2.900 ${18 - len}h-5.800z`} fill="#ff9d45" />
    <path d={`M0 ${-len}l4.500 18.500h-9z`} fill="#6666cc" stroke="#222" strokeWidth=".6" />
  </g>
);

const notes: [number, number, string][] = [
  [1217, 930, "标记"], [1236, 930, "处数"], [1272, 930, "更改文件号"], [1312, 930, "签"], [1325, 930, "字"], [1352, 930, "日期"],
  [1220, 943, "设"], [1232, 943, "计"], [1220, 956, "校"], [1232, 956, "对"], [1220, 969, "审"], [1232, 969, "核"], [1220, 983, "批"], [1232, 983, "准"],
  [1563, 911, "图样标记"], [1616, 911, "重"], [1629, 911, "量"], [1656, 911, "比"], [1668, 911, "例"],
  [1550, 946, "共"], [1575, 946, "页"], [1630, 946, "第"], [1654, 946, "页"],
];

const margin: [number, number, string][] = [
  [620, 730, "目"], [629, 730, "件"], [638, 730, "登"], [647, 730, "记"], [630, 774, "图"], [630, 819, "描"],
  [621, 864, "图"], [631, 864, "总"], [643, 864, "号"], [630, 909, "字"], [630, 954, "期"],
];

function Sheet() {
  return (
    <main className="relative min-w-0 flex-1 overflow-hidden bg-[#fdfdfd]">
      <svg viewBox="614 205 1306 805" preserveAspectRatio="xMinYMin meet" className="block size-full" fill="none" stroke="#000" role="img" aria-label="link_part 工程图">
        <path d="M614 215.500h1080.500M1694.500 999.500H614" stroke="#888" />
        <path d="M1694.500 215v785" />
        <rect x="652" y="228" width="1030" height="758" strokeWidth="2" />
        <path d="M799.500 228v26.500H651.500" strokeWidth="1" />
        <path d="M614 716.500h37M614 761.500h37M614 806.500h37M614 851.500h37M614 896.500h37M614 959.500h37" />
        <path d="M614 735.500h37M614 780.500h37M614 825.500h37M614 869.500h37M614 914.500h37M614 941.500h37M614 986.500h37" stroke="#999" />

        <g strokeWidth="1.5">
          <Arm />
          <g transform="rotate(180 1158.800 670)"><Arm /></g>
          <path d="M1000 630.500h318M1000 709.500h318" />
          <Hub x={1000.5} />
          <Hub x={1317.5} />
        </g>

        <g transform="translate(1139.700 607)" stroke="none">
          <Pointer len={72} />
          <g transform="rotate(90)"><Pointer len={72} /></g>
          <g transform="rotate(180)"><Pointer len={72} /></g>
          <g transform="rotate(270)"><Pointer len={72} /></g>
          <circle r="4.5" fill="#4d4dbb" stroke="#222" strokeWidth=".6" />
        </g>

        <path d="M1576 334.500h14.500L1583 348l-7-13.500M1583 348L1599.500 319" strokeWidth="1" />

        <path d="M1206 986V867.500h475.500M1522.500 867v119M1206 920h158M1206 933.500h158M1522.500 901.500h159M1522.500 949h159M1364.500 867v119M1364.500 936h158" strokeWidth="2" />
        <g strokeWidth="1.2">
          <path d="M1206 880.500h158M1206 893.500h158M1206 906.500h158M1206 946.500h158M1206 959.500h158M1206 973h158M1227.500 867v66M1246 867v119M1299 867v119M1338.500 867v66" />
          <path d="M1522.500 914.500h159M1522.500 935.500h159M1602.500 901v48M1642 901v35M1545 914v22M1565.500 914v22M1584 914v22" />
        </g>

        <g fill="#111" stroke="none" textAnchor="middle" className="[font-family:'Noto_Sans_CJK_SC',sans-serif]">
          <g fontSize="9">{notes.map(([x, y, t], i) => <text key={i} x={x} y={y}>{t}</text>)}</g>
          <g fontSize="10">{margin.map(([x, y, t], i) => <text key={i} x={x} y={y}>{t}</text>)}</g>
          <text x="1602" y="970" fontSize="8">西门子产品管理软件（上海）有限公司</text>
          <text x="1564" y="346" fontSize="11">其余</text>
        </g>
      </svg>
      <div className="absolute top-[9px] left-[489px] flex h-[30px] w-[74px] items-start border-b border-[#d8d8d8] bg-[#fdfdfd]">
        <button aria-label="捕捉点" className="flex h-6 items-center gap-[5px] pl-3.5">
          <Svg w={22}><circle cx="11" cy="11" r="8.5" stroke="#444" strokeWidth="1.2" /><path d="M11 0v7M11 15v7M0 11h7M15 11h7M9 5l2 2 2-2M9 17l2-2 2 2M5 9l2 2-2 2M17 9l-2 2 2 2" stroke="#444" strokeWidth="1.2" /><circle cx="11" cy="11" r="3" fill="#f58a1f" stroke="#c45a00" /></Svg>
          <Caret />
        </button>
        <span className="ml-3 h-6 w-px bg-[#d8d8d8]" />
        <button aria-label="工具选项" className="pt-[18px] pl-1"><Caret /></button>
      </div>
    </main>
  );
}

/* ---------- input method bar ---------- */

function InputBar() {
  return (
    <div className="absolute bottom-0 left-[1041px] flex h-[27px] w-[222px] items-center justify-between rounded-sm border border-[#b8d4ec] bg-white pr-1 text-[#0a6fd8]">
      <span className="-mt-1 -mr-1 -ml-1">
        <Svg w={30}>
          <path d="M2 4L25 0l5 22-5 6-20 2L0 8z" fill="#f4511e" />
          <path d="M22 8C17 4 8 6 8 10.500S22 14 21 19s-10 5-14 1" stroke="#fff" strokeWidth="3.5" />
        </Svg>
      </span>
      <span className="text-[14px] leading-5 font-bold">英</span>
      <Svg w={12}><circle cx="2.5" cy="4" r="1.8" fill="currentColor" /><path d="M8 8h3v2l-2 2" stroke="currentColor" strokeWidth="1.8" /></Svg>
      <Mic size={15} strokeWidth={2.5} />
      <Keyboard size={17} strokeWidth={2.2} />
      <Shirt size={17} fill="#a26bf0" color="#ef5da8" />
      <Gamepad2 size={17} strokeWidth={2.5} />
      <Svg w={14}><rect width="6" height="6" rx="1.5" fill="currentColor" /><circle cx="11" cy="3" r="3" fill="currentColor" /><rect y="8" width="6" height="6" rx="1.5" fill="currentColor" /><rect x="8" y="8" width="6" height="6" rx="1.5" fill="currentColor" /></Svg>
      <Svg w={15} h={16}><path d="M7.500 0l2 3 4-.5-1 4 2 2.500-3 1.500v3.500l-4 .500-4-.500V10.500L.5 9l2-2.500-1-4 4 .500z" fill="currentColor" /><path d="M7.500 6v8M5.500 9l2-3 2 3" stroke="#fff" strokeWidth="1.3" /></Svg>
    </div>
  );
}

export default function App() {
  return (
    <div className="relative flex h-screen flex-col overflow-hidden bg-white text-[#1a1a1a] [font-family:'Noto_Sans','Noto_Sans_CJK_SC',sans-serif]">
      <Header />
      <Ribbon />
      <FilterBar />
      <div className="flex min-h-0 flex-1">
        <ResourceBar />
        <div className="flex min-w-0 flex-1 flex-col">
          <div className="flex h-[27px] shrink-0">
            <div className="flex w-[323px] items-center pr-3 pb-0.5 pl-1.5">
              <Bracket />
              <h2 className="pl-1 text-[12px] leading-5">部件导航器</h2>
              <button aria-label="最大化" className="ml-auto h-[11px] w-3 border border-t-2 border-black" />
            </div>
            <div className="flex w-[133px] items-center bg-[#005f87] pb-0.5 pl-2 text-[12px] leading-5 text-white">
              <Svg w={13} h={15}><path d="M0 2h9l4-1v3H0z" fill="#ddd" stroke="#222" /><path d="M1.500 4.500h10v9h-10z" fill="#333" stroke="#ddd" /><circle cx="6.5" cy="9" r="3" fill="#555" stroke="#fff" /></Svg>
              <a href="#link_part" className="pl-[5px]">link_part.prt</a>
              <span className="pr-[5px] pl-1.5"><Svg w={11} h={12}><path d="M8 7v4H1V1h5l2 2" stroke="#fff" strokeWidth="1.5" /><path d="M4 7l5-3" stroke="#fff" strokeWidth="1.5" /></Svg></span>
              <button aria-label="关闭部件"><X size={11} strokeWidth={3} /></button>
            </div>
            <div className="flex-1 border-b-2 border-[#005f87]" />
          </div>
          <div className="flex min-h-0 flex-1">
            <PartNavigator />
            <SectionDialog />
            <Sheet />
          </div>
        </div>
      </div>
      <footer className="h-[23px] shrink-0 border-t border-b border-[#a8b4b8] pl-[3px] text-[11px] leading-[20px] font-medium">选择对象以自动判断矢量</footer>
      <InputBar />
      <div className="pointer-events-none absolute right-2 bottom-2.5 text-[35px] leading-[44px] whitespace-nowrap text-[#d9d9d9]/90 [font-family:'Liberation_Sans','Noto_Sans_CJK_SC',sans-serif] [text-shadow:1px_1px_1px_#888]">
        CSDN @山涧果子
      </div>
    </div>
  );
}
